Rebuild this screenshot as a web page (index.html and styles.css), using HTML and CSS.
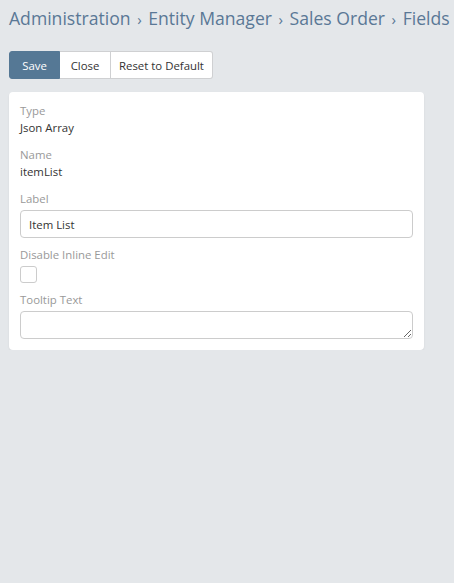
FILE: index.html
```html
<!DOCTYPE html>
<html>
<head>
<meta charset="utf-8">
<link rel="stylesheet" href="styles.css">
</head>
<body>
<div class="page">
  <h1 class="breadcrumb">Administration <span class="sep">›</span> Entity Manager <span class="sep">›</span> Sales Order <span class="sep">›</span> Fields</h1>
  <div class="btn-group">
    <button class="btn btn-primary">Save</button>
    <button class="btn">Close</button>
    <button class="btn">Reset to Default</button>
  </div>
  <div class="panel">
    <div class="cell static">
      <div class="label">Type</div>
      <div class="value">Json Array</div>
    </div>
    <div class="cell static">
      <div class="label">Name</div>
      <div class="value">itemList</div>
    </div>
    <div class="cell">
      <div class="label">Label</div>
      <input class="input" type="text" value="Item List">
    </div>
    <div class="cell">
      <div class="label">Disable Inline Edit</div>
      <span class="checkbox"></span>
    </div>
    <div class="cell last">
      <div class="label">Tooltip Text</div>
      <textarea class="textarea"></textarea>
    </div>
  </div>
</div>
</body>
</html>
```

FILE: styles.css
```css
* { box-sizing: border-box; }
html, body {
  margin: 0;
  padding: 0;
  background: #e4e7ea;
  font-family: "Open Sans", "Liberation Sans", sans-serif;
  color: #333;
}
.page {
  padding: 4px 9px 0 9px;
}
.breadcrumb {
  margin: 0;
  height: 27px;
  font-size: 17.6px;
  font-weight: 400;
  line-height: 28px;
  color: #5a7896;
  white-space: nowrap;
}
.breadcrumb .sep {
  display: inline-block;
  font-size: 15px;
  line-height: 1;
  margin: 0 2px;
  color: #5a7896;
}
.btn-group {
  display: flex;
  margin-top: 20px;
}
.btn {
  font-family: inherit;
  font-size: 11.4px;
  height: 28px;
  min-width: 51px;
  padding: 0 8px;
  border: 1px solid #cfd0d2;
  border-left: none;
  background: #fff;
  color: #333;
  margin: 0;
}
.btn:first-child { border-radius: 3px 0 0 3px; }
.btn:last-child { border-radius: 0 3px 3px 0; }
.btn-primary {
  background: #557895;
  border: 1px solid #557895;
  color: #fff;
}
.panel {
  margin-top: 13px;
  width: 415px;
  background: #fff;
  border-radius: 4px;
  box-shadow: 0 1px 2px rgba(0,0,0,0.08);
  padding: 10px 11px 11px 11px;
}
.cell { margin-bottom: 8px; }
.cell.last { margin-bottom: 0; }
.cell.static { margin-bottom: 10px; }
.label {
  font-size: 11.4px;
  line-height: 17px;
  color: #999;
  margin-bottom: 3px;
}
.static .label { margin-bottom: 0; }
.value {
  font-size: 11.4px;
  line-height: 17px;
  color: #333;
}
.input, .textarea {
  display: block;
  width: 100%;
  height: 28px;
  border: 1px solid #ccc;
  border-radius: 4px;
  font-family: inherit;
  font-size: 11.4px;
  color: #333;
  padding: 0 8px;
  margin: 0;
  background: #fff;
}
.textarea {
  margin-top: 1px;
  resize: vertical;
  padding: 5px 8px;
}
.checkbox {
  display: block;
  width: 17px;
  height: 17px;
  border: 1px solid #ccc;
  border-radius: 3px;
  background: #fff;
}
```
